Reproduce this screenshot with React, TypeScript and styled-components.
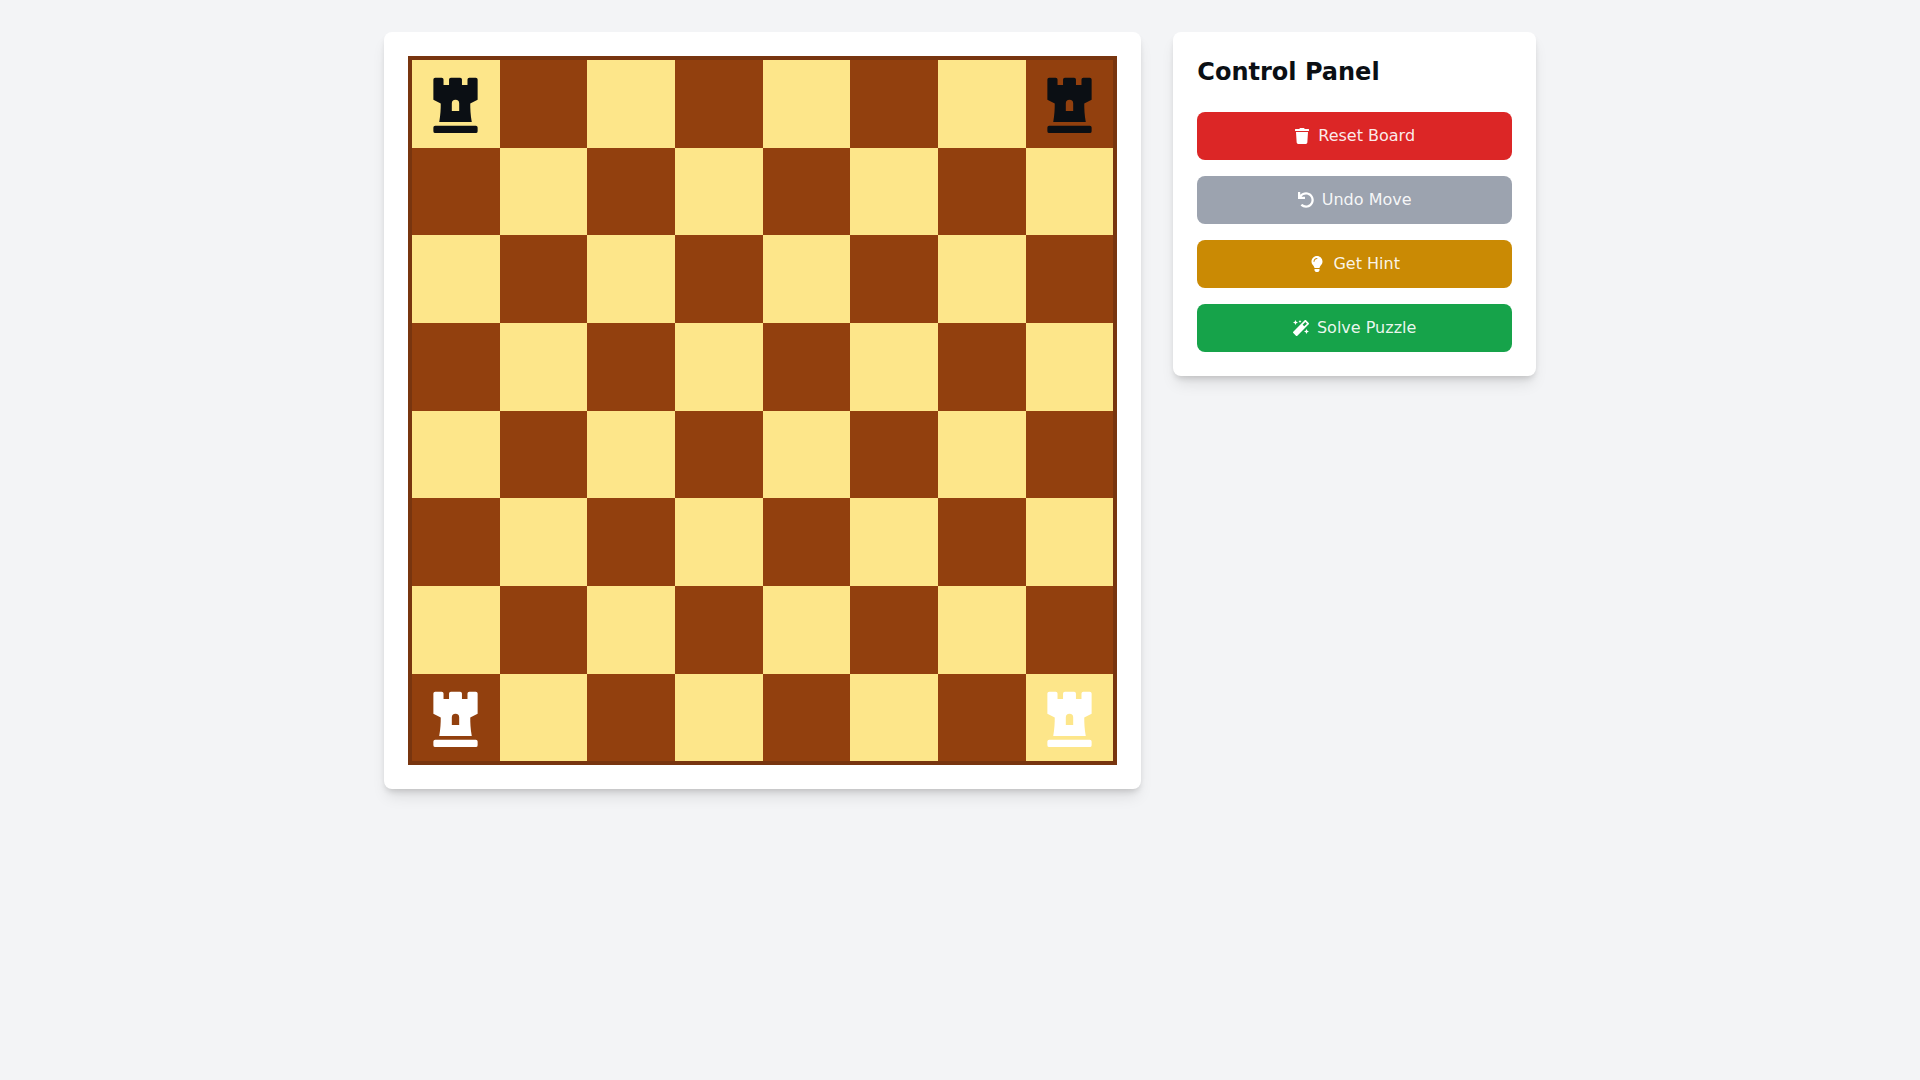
import React from 'react'
import styled, { createGlobalStyle } from 'styled-components'
import { FaChessRook, FaLightbulb, FaMagic, FaTrash, FaUndo } from 'react-icons/fa'

const WHITE = '#ffffff'
const BLACK = '#0b0f14'

const PIECES: Record<string, string> = {
  '0-0': BLACK,
  '0-7': BLACK,
  '7-0': WHITE,
  '7-7': WHITE,
}

const ACTIONS = [
  { label: 'Reset Board', color: '#dc2626', icon: <FaTrash /> },
  { label: 'Undo Move', color: '#9ca3af', icon: <FaUndo /> },
  { label: 'Get Hint', color: '#ca8a04', icon: <FaLightbulb /> },
  { label: 'Solve Puzzle', color: '#16a34a', icon: <FaMagic /> },
]

const App = () => {
  const rows = [0, 1, 2, 3, 4, 5, 6, 7]
  return (
    <>
      <GlobalStyle />
      <Page>
        <Layout>
          <BoardCard>
            <Board>
              {rows.map((row) =>
                rows.map((col) => {
                  const piece = PIECES[`${row}-${col}`]
                  return (
                    <Square key={`${row}-${col}`} $light={(row + col) % 2 === 0}>
                      {piece && (
                        <Piece $color={piece}>
                          <FaChessRook />
                        </Piece>
                      )}
                    </Square>
                  )
                })
              )}
            </Board>
          </BoardCard>
          <Panel>
            <Title>Control Panel</Title>
            <Actions>
              {ACTIONS.map((action) => (
                <ActionButton key={action.label} $color={action.color}>
                  <IconSlot>{action.icon}</IconSlot>
                  <Label>{action.label}</Label>
                </ActionButton>
              ))}
            </Actions>
          </Panel>
        </Layout>
      </Page>
    </>
  )
}

export default App

const GlobalStyle = createGlobalStyle`
  * {
    box-sizing: border-box;
  }
  body {
    margin: 0;
    background: #f3f4f6;
    font-family: "DejaVu Sans", sans-serif;
  }
`

const Page = styled.div`
  min-height: 100vh;
  padding: 32px 0;
`

const Layout = styled.div`
  display: grid;
  grid-template-columns: repeat(3, minmax(0, 1fr));
  align-items: start;
  gap: 32px;
  width: 1152px;
  margin: 0 auto;
`

const Card = styled.div`
  background: #ffffff;
  padding: 24px;
  border-radius: 8px;
  box-shadow: 0 10px 15px -3px rgba(0, 0, 0, 0.1), 0 4px 6px -2px rgba(0, 0, 0, 0.15);
`

const BoardCard = styled(Card)`
  grid-column: span 2;
`

const Board = styled.div`
  display: grid;
  grid-template-columns: repeat(8, 1fr);
  grid-template-rows: repeat(8, 1fr);
  aspect-ratio: 1;
  border: 4px solid #78350f;
`

const Square = styled.div<{ $light: boolean }>`
  display: flex;
  align-items: center;
  justify-content: center;
  min-width: 0;
  min-height: 0;
  overflow: hidden;
  background: ${(props) => (props.$light ? '#fde68a' : '#92400e')};
`

const Piece = styled.span<{ $color: string }>`
  display: inline-flex;
  font-size: 59px;
  line-height: 1;
  color: ${(props) => props.$color};
`

const Panel = styled(Card)``

const Title = styled.h2`
  margin: 0 0 24px;
  font-size: 24px;
  line-height: 32px;
  font-weight: 700;
  color: #0b0f14;
`

const Actions = styled.div`
  display: flex;
  flex-direction: column;
  gap: 16px;
`

const ActionButton = styled.button<{ $color: string }>`
  display: flex;
  align-items: center;
  justify-content: center;
  height: 48px;
  width: 100%;
  padding: 12px 16px;
  border: none;
  border-radius: 8px;
  background: ${(props) => props.$color};
  color: #ffffff;
  font-family: inherit;
  font-size: 16px;
  line-height: 24px;
  cursor: pointer;
`

const Label = styled.span`
  color: rgba(255, 255, 255, 0.92);
`

const IconSlot = styled.span`
  display: inline-flex;
  margin-right: 8px;
  font-size: 16px;
`
